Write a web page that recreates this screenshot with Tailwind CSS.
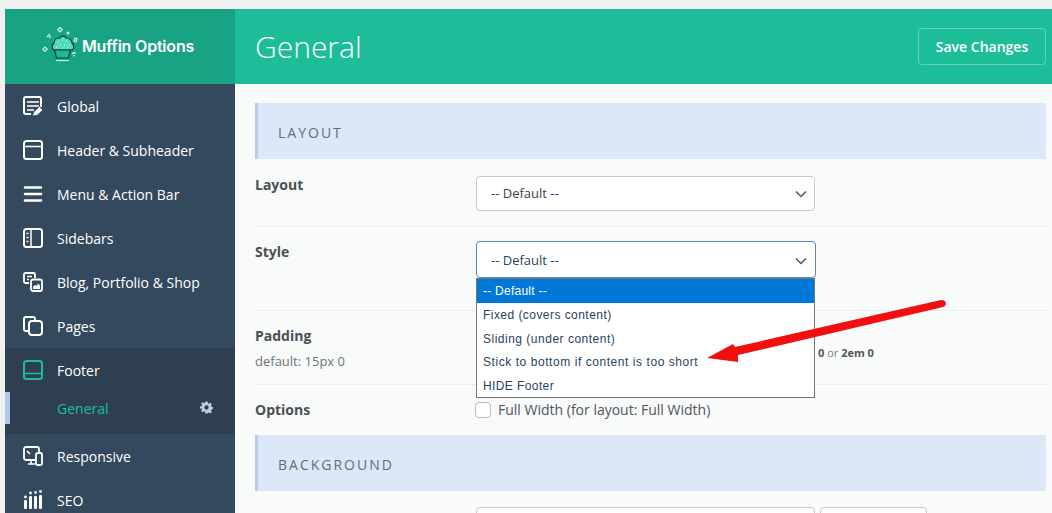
<!DOCTYPE html>
<html lang="en">
<head>
  <meta charset="UTF-8" />
  <title>Muffin Options</title>
  <script src="https://cdn.jsdelivr.net/npm/@tailwindcss/browser@4"></script>
</head>
<body class="bg-[#f1f1f1] overflow-hidden">
  <div class="flex h-[513px] w-[1052px] pt-[9px] pl-[5px] overflow-hidden font-['Open_Sans',sans-serif] relative">

    <!-- sidebar -->
    <aside class="w-[230px] shrink-0 bg-[#34495e] text-[14px] text-white">
      <div class="h-[75px] bg-[#18a385] flex items-center pl-[37px]">
        <svg class="w-[40px] h-[36px] -mt-[3px]" viewBox="0 0 40 36" fill="none">
          <path d="M11.500 23c-1.500-2-1.500-5 .5-7 0-4 4-5 6-5 1-2.500 5-2.500 6 0 3 0 6 2 6 5 2 2 2 5 .5 7z" fill="#4fdcbd" stroke="#123f3a" stroke-width="1.200"/>
          <path d="M12.500 23h16l-2 8h-12z" fill="#1fb596" stroke="#123f3a" stroke-width="1.200"/>
          <path d="M14 33.500h13" stroke="#b9f2e4" stroke-width="1.300"/>
          <path d="M16 15h1M20 13h1M24 14h1M27 18h1M18 18h1M22 18h1M14 20h1M25 21h1M20 21h1" stroke="#e2fff8" stroke-width="1.200"/>
          <path d="M18 .5l2.200 2.200L18 4.900l-2.200-2.200zM3 20l2.200 2.200L3 24.400.8 22.200z" stroke="#c8f5ea" stroke-width="1.200"/>
          <circle cx="26" cy="6" r="1.500" fill="#c8f5ea"/>
          <path d="M5 10l3-3M7 11l2-2M33 11l2 1-1 3-2-1zM30 27l2-1.500 2 1M31 29l2-.5" stroke="#c8f5ea" stroke-width="1.200"/>
        </svg>
        <span class="-mt-[2px] font-['Inter',sans-serif] font-semibold text-[16px] tracking-[-0.2px]">Muffin Options</span>
      </div>

      <nav>
        <a class="h-[44px] flex items-center pl-[18px] gap-[14px]">
          <svg class="w-[20px] h-[20px]" viewBox="0 0 20 20" fill="none" stroke="#fff" stroke-width="2"><path d="M8 18H3a2 2 0 0 1-2-2V3a2 2 0 0 1 2-2h13a2 2 0 0 1 2 2v8"/><path d="M4 6h12M4 10h12M4 14h7" stroke-width="1.700"/><path d="M9.500 20l1-4 6-5.500 3.500 3.500-6 5.500z" fill="#fff" stroke="#34495e" stroke-width="1"/></svg>
          <span>Global</span>
        </a>
        <a class="h-[44px] flex items-center pl-[18px] gap-[14px]">
          <svg class="w-[20px] h-[20px]" viewBox="0 0 20 20" fill="none" stroke="#fff" stroke-width="2"><rect x="1" y="1" width="18" height="18" rx="2.500"/><path d="M1 6.500h18" stroke-width="1.500"/></svg>
          <span>Header &amp; Subheader</span>
        </a>
        <a class="h-[44px] flex items-center pl-[18px] gap-[14px]">
          <svg class="w-[20px] h-[20px]" viewBox="0 0 20 20" fill="none" stroke="#fff" stroke-width="2.600" stroke-linecap="round"><path d="M2 3.500h16M2 10h16M2 16.500h16"/></svg>
          <span>Menu &amp; Action Bar</span>
        </a>
        <a class="h-[44px] flex items-center pl-[18px] gap-[14px]">
          <svg class="w-[20px] h-[20px]" viewBox="0 0 20 20" fill="none" stroke="#fff" stroke-width="2"><rect x="1" y="1" width="18" height="18" rx="2.500"/><path d="M8 1v18" stroke-width="1.500"/><path d="M3.500 5.500h2M3.500 9.500h2M3.500 13.500h2" stroke-width="1.600"/></svg>
          <span>Sidebars</span>
        </a>
        <a class="h-[44px] flex items-center pl-[18px] gap-[14px]">
          <svg class="w-[20px] h-[20px]" viewBox="0 0 20 20" fill="none" stroke="#fff" stroke-width="1.800"><path d="M6 11H2.500A1.500 1.500 0 0 1 1 9.500v-7A1.500 1.500 0 0 1 2.500 1h8A1.500 1.500 0 0 1 12 2.500V6"/><path d="M4 4.500h5M4 7.500h2" stroke-width="1.500"/><rect x="8" y="7.500" width="11" height="11.500" rx="2" fill="#34495e"/><path d="M10 17v-2.500l2-1.500 1.500 1 1.500-2.500 2 2V17z" fill="#fff" stroke="none"/></svg>
          <span>Blog, Portfolio &amp; Shop</span>
        </a>
        <a class="h-[44px] flex items-center pl-[18px] gap-[14px]">
          <svg class="w-[20px] h-[20px]" viewBox="0 0 20 20" fill="none" stroke="#fff" stroke-width="2"><path d="M5 15H3a2 2 0 0 1-2-2V3a2 2 0 0 1 2-2h7a2 2 0 0 1 2 2v2"/><rect x="6" y="5" width="13" height="14" rx="3"/></svg>
          <span>Pages</span>
        </a>

        <div class="bg-[#2f3f52] h-[86px]">
          <a class="h-[44px] flex items-center pl-[18px] gap-[14px]">
            <svg class="w-[20px] h-[20px]" viewBox="0 0 20 20" fill="none" stroke="#1dbd9a" stroke-width="2"><rect x="1" y="1" width="18" height="18" rx="2.500"/><path d="M1 13.500h18" stroke-width="1.500"/></svg>
            <span>Footer</span>
          </a>
          <a class="h-[32px] flex items-center justify-between pl-[47px] pr-[22px] text-[#1dbd9a] border-l-[5px] border-[#aecbeb]">
            <span>General</span>
            <svg class="w-[13px] h-[13px] -mt-[2px]" viewBox="0 0 24 24" fill="#c3ccd6"><path fill-rule="evenodd" d="M10 1h4l.6 3.100 2 .8 2.600-1.800 2.800 2.800-1.800 2.600.8 2 3 .6v4l-3 .6-.8 2 1.800 2.600-2.800 2.800-2.600-1.800-2 .8L14 23h-4l-.6-3.100-2-.8-2.600 1.800-2.800-2.800 1.800-2.600-.8-2L0 14v-4l3-.6.8-2L2 4.900l2.800-2.800 2.600 1.800 2-.8zM12 8a4 4 0 1 0 0 8 4 4 0 0 0 0-8z"/></svg>
          </a>
        </div>

        <a class="h-[44px] flex items-center pl-[18px] gap-[14px]">
          <svg class="w-[20px] h-[20px]" viewBox="0 0 20 20" fill="none" stroke="#fff" stroke-width="1.800"><path d="M12 14H3a2 2 0 0 1-2-2V3a2 2 0 0 1 2-2h11a2 2 0 0 1 2 2v3"/><path d="M5 18h7M8 14v4M4 5l3 3" stroke-width="1.600"/><rect x="13" y="7" width="6" height="12" rx="1.500"/></svg>
          <span>Responsive</span>
        </a>
        <a class="h-[44px] flex items-center pl-[18px] gap-[14px]">
          <svg class="w-[20px] h-[20px]" viewBox="0 0 20 20" fill="#fff"><circle cx="2.500" cy="7" r="1.400"/><rect x="1" y="10" width="3" height="9" rx="1"/><circle cx="7.500" cy="3" r="1.400"/><rect x="6" y="6" width="3" height="13" rx="1"/><circle cx="12.500" cy="2.500" r="1.400"/><rect x="11" y="6" width="3" height="13" rx="1"/><circle cx="17.500" cy="1.500" r="1.400"/><rect x="16" y="5" width="3" height="14" rx="1"/></svg>
          <span>SEO</span>
        </a>
      </nav>
    </aside>

    <!-- content -->
    <div class="flex-1 flex flex-col bg-[#f9fafa] text-[#50565e]">
      <header class="h-[75px] shrink-0 bg-[#1dbd9a] flex items-center justify-between pl-[20px] pr-[6px] text-white">
        <h1 class="text-[30px] font-light">General</h1>
        <button class="w-[128px] h-[37px] rounded-[4px] border border-white/30 text-[14px] font-semibold">Save Changes</button>
      </header>

      <main class="pl-[20px] pr-[6px] pt-[19px]">
        <div class="h-[56px] bg-[#dce7f7] border-l-[3px] border-[#b9cbe7] flex items-center pl-[20px] pt-[2px] text-[14px] tracking-[2px] text-[#646d78]">LAYOUT</div>

        <div class="h-[68px] border-b border-[#ebeced] flex pt-[17px]">
          <label class="w-[221px] -mt-[2px] text-[14px] font-bold text-[#4a4f55]">Layout</label>
          <div class="w-[339px] h-[35px] bg-white border border-[#c8c9ca] rounded-[4px] flex items-center justify-between pl-[14px] pr-[7px] text-[13px] text-[#3a4450]">
            <span class="pt-[1px]">-- Default --</span>
            <svg class="w-[12px] h-[8px]" viewBox="0 0 12 8" fill="none" stroke="#50565e" stroke-width="1.500"><path d="M1 1.500l5 5 5-5"/></svg>
          </div>
        </div>

        <div class="h-[84px] border-b border-[#ebeced] flex pt-[14px]">
          <label class="w-[221px] text-[14px] font-bold text-[#4a4f55]">Style</label>
          <div class="w-[340px] h-[37px] bg-white border border-[#5a86b5] rounded-[4px] flex items-center justify-between pl-[14px] pr-[8px] text-[13px] text-[#2a3f5f]">
            <span class="pt-[3px]">-- Default --</span>
            <svg class="w-[12px] h-[8px] mt-[2px]" viewBox="0 0 12 8" fill="none" stroke="#50565e" stroke-width="1.500"><path d="M1 1.500l5 5 5-5"/></svg>
          </div>
        </div>

        <div class="h-[74px] border-b border-[#ebeced] flex pt-[14px]">
          <div class="w-[221px]">
            <div class="text-[14px] font-bold text-[#4a4f55]">Padding</div>
            <div class="text-[13px] mt-[6px] text-[#6e747b]">default: 15px 0</div>
          </div>
          <div class="pl-[342px] pt-[20px] text-[11px] text-[#7a8087]"><b class="text-[#50565e]">0</b> or <b class="text-[#50565e]">2em 0</b></div>
        </div>

        <div class="h-[50px] flex pt-[14px]">
          <label class="w-[220px] text-[14px] font-bold text-[#4a4f55]">Options</label>
          <div class="flex items-center gap-[7px] h-[20px] text-[14px]">
            <span class="w-[16px] h-[16px] mt-[2px] bg-white border border-[#b9bbbd] rounded-[4px]"></span>
            <span>Full Width (for layout: Full Width)</span>
          </div>
        </div>

        <div class="h-[56px] bg-[#dce7f7] border-l-[3px] border-[#b9cbe7] flex items-center pl-[20px] pt-[2px] text-[14px] tracking-[2px] text-[#646d78]">BACKGROUND</div>

        <div class="flex pt-[16px]">
          <label class="w-[221px] text-[14px] font-bold text-[#4a4f55]">Image</label>
          <div class="w-[339px] h-[35px] bg-white border border-[#c8c9ca] rounded-[4px]"></div>
          <div class="w-[107px] h-[35px] ml-[5px] bg-white border border-[#c8c9ca] rounded-[4px]"></div>
        </div>
      </main>
    </div>

    <!-- open select list -->
    <ul class="absolute left-[476px] top-[278px] w-[339px] h-[120px] bg-white border border-[#767676] font-['Liberation_Sans',sans-serif] text-[12px] text-[#2a3f5f]">
      <li class="h-[24px] flex items-center pl-[6px] bg-[#0078d7] text-white tracking-[0.25px]">-- Default --</li>
      <li class="h-[24px] flex items-center pl-[6px] tracking-[0.45px]">Fixed (covers content)</li>
      <li class="h-[23px] flex items-center pl-[6px] tracking-[0.5px]">Sliding (under content)</li>
      <li class="h-[24px] flex items-center pl-[6px] tracking-[0.56px]">Stick to bottom if content is too short</li>
      <li class="h-[24px] flex items-center pl-[6px] tracking-[0.4px]">HIDE Footer</li>
    </ul>

    <!-- annotation arrow -->
    <svg class="absolute left-[700px] top-[295px] w-[250px] h-[75px]" viewBox="0 0 250 75">
      <path d="M7 63 L33 49 L35 52 L241 5 Q246 5 246 9 Q245 12 241 12.500 L38 60 L38 67 Z" fill="#f01010"/>
    </svg>
  </div>
</body>
</html>
